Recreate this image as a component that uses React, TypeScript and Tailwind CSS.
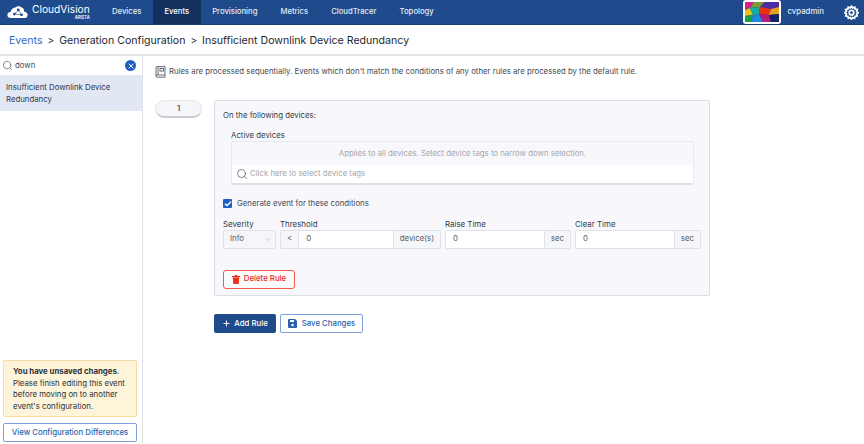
import { Search, ChevronDown, Plus, X, Check } from "lucide-react";

function Logo() {
  return (
    <svg width="21" height="14" viewBox="0 0 26 17" className="shrink-0">
      <path d="M5 16 C1.5 16 0 13.5 0.5 11.5 C1 9.5 2.5 8.5 4.5 8.5 C5 5 8 3 10.5 3 C12 0.8 16 0.5 18 3 C20.5 3.5 21.5 6 21 8 C24 8.5 26 10.5 25.5 13 C25 15 23.5 16 21.5 16 Z" fill="#ffffff" />
      <circle cx="9" cy="11" r="1.7" fill="#1f4a8c" />
      <circle cx="14" cy="6" r="1.7" fill="#1f4a8c" />
      <circle cx="18" cy="12" r="1.7" fill="#1f4a8c" />
      <path d="M9 11 L14 6 L18 12 Z" fill="none" stroke="#1f4a8c" strokeWidth="0.8" />
    </svg>
  );
}

function Avatar() {
  return (
    <div className="w-[38px] h-[24px] bg-white rounded-[3px] p-[2px] shrink-0">
      <svg viewBox="0 0 34 20" className="w-full h-full block" preserveAspectRatio="none">
        <rect width="34" height="20" fill="#2a2a8c" />
        <polygon points="0,0 9,0 5,6 0,8" fill="#d81f8f" />
        <polygon points="9,0 20,0 15,5 5,6" fill="#7f9a30" />
        <polygon points="20,0 34,0 34,5 26,7 15,5" fill="#4a2fa0" />
        <polygon points="0,8 5,6 8,13 0,14" fill="#e2c41e" />
        <polygon points="5,6 15,5 14,12 8,13" fill="#14b0a0" />
        <polygon points="15,5 26,7 24,13 14,12" fill="#ea3410" />
        <polygon points="26,7 34,5 34,12 24,13" fill="#e8a020" />
        <polygon points="0,14 8,13 6,20 0,20" fill="#18a040" />
        <polygon points="8,13 14,12 18,20 6,20" fill="#1c8ae0" />
        <polygon points="14,12 24,13 26,20 18,20" fill="#b81c78" />
        <polygon points="24,13 34,12 34,20 26,20" fill="#15206a" />
      </svg>
    </div>
  );
}

function Gear() {
  return (
    <svg width="15" height="15" viewBox="0 0 24 24" fill="none" stroke="#ffffff" strokeWidth="2.8" className="shrink-0">
      <path d="M12 2 L14 4.6 L17.2 3.4 L17.9 6.7 L21.2 7.2 L20.2 10.4 L22.8 12.4 L20.2 14.4 L21 17.6 L17.8 18 L16.9 21.2 L13.9 20 L12 22.6 L10 20 L7 21.2 L6.2 18 L3 17.6 L3.8 14.4 L1.2 12.4 L3.8 10.4 L2.8 7.2 L6.1 6.7 L6.8 3.4 L10 4.6 Z" />
      <circle cx="12" cy="12.3" r="3.6" />
    </svg>
  );
}

function Book() {
  return (
    <svg width="11" height="12" viewBox="0 0 11 12" fill="none" stroke="#555c68" strokeWidth="0.9" className="shrink-0 mr-[3px]">
      <path d="M1 10 V1.5 Q1 0.6 2 0.6 H10 V9 H2 Q1 9 1 10 Q1 11.2 2 11.2 H10 V9" />
      <path d="M3 0.6 V9" />
      <rect x="5" y="2.5" width="3.5" height="2.6" />
    </svg>
  );
}

function TrashIcon() {
  return (
    <svg width="8" height="9" viewBox="0 0 8 9" fill="#ee2c1c" className="mr-[4px] shrink-0">
      <rect x="0" y="1" width="8" height="1.2" />
      <rect x="2.8" y="0" width="2.4" height="1.4" />
      <path d="M0.8 2.6 H7.2 L6.7 9 H1.3 Z" />
    </svg>
  );
}

function SaveIcon() {
  return (
    <svg width="9" height="9" viewBox="0 0 9 9" className="mr-[5px] shrink-0">
      <path d="M1 0 H7 L9 2 V8 Q9 9 8 9 H1 Q0 9 0 8 V1 Q0 0 1 0 Z" fill="#2c5fb0" />
      <rect x="2" y="1" width="4" height="2" fill="#ffffff" />
      <circle cx="4.5" cy="6" r="1.3" fill="#ffffff" />
    </svg>
  );
}

function NavItem({ label, active }: { label: string; active?: boolean }) {
  return (
    <div className={active ? "h-full px-[11.5px] flex items-center bg-[#14305f] text-white" : "h-full px-[11.5px] flex items-center text-[#e4eaf5]"}>
      {label}
    </div>
  );
}

function FieldLabel({ children }: { children: string }) {
  return <div className="text-[7.9px] leading-[10px] text-[#333b47]">{children}</div>;
}

function Addon({ children, left }: { children: string; left?: boolean }) {
  return (
    <div className={left ? "h-full px-[6px] flex items-center bg-[#f5f6f9] border-r border-[#dfe1e6] text-[#555c68]" : "h-full px-[6px] flex items-center bg-[#f5f6f9] border-l border-[#dfe1e6] text-[#555c68]"}>
      {children}
    </div>
  );
}

export default function App() {
  return (
    <div className="w-[864px] h-[444px] bg-white flex flex-col overflow-hidden text-[7.8px] [font-family:Inter,sans-serif] text-[#333b47]">
      <header className="h-[25px] shrink-0 bg-[#1f4a8c] flex items-center border-b border-[#183d75]">
        <div className="flex items-center pl-[7px] w-[100.5px] gap-[4px]">
          <Logo />
          <div className="flex flex-col items-end text-white leading-none">
            <span className="text-[10.2px] leading-[11px] whitespace-nowrap">CloudVision</span>
            <span className="text-[4.2px] font-semibold leading-[5px]">ARISTA</span>
          </div>
        </div>
        <nav className="flex h-full items-center text-[7.7px] font-medium">
          <NavItem label="Devices" />
          <NavItem label="Events" active />
          <NavItem label="Provisioning" />
          <NavItem label="Metrics" />
          <NavItem label="CloudTracer" />
          <NavItem label="Topology" />
        </nav>
        <div className="ml-auto flex items-center pr-[5px]">
          <Avatar />
          <span className="ml-[6px] mr-[20px] text-[7.8px] font-medium text-[#e4eaf5]">cvpadmin</span>
          <Gear />
        </div>
      </header>

      <div className="h-[31px] shrink-0 border-b-2 border-[#e4e5e8] flex items-center pl-[9px] pt-[2px] text-[10.6px] text-[#1f2733]">
        <span className="text-[#2f6bc4]">Events</span>
        <span className="mx-[5px] text-[10px]">&gt;</span>
        <span>Generation Configuration</span>
        <span className="mx-[5px] text-[10px]">&gt;</span>
        <span>Insufficient Downlink Device Redundancy</span>
      </div>

      <div className="flex-1 flex min-h-0">
        <aside className="w-[143px] shrink-0 border-r border-[#dfe1e6] flex flex-col">
          <div className="h-[19px] flex items-center pl-[2px] pr-[6px]">
            <Search size={11} strokeWidth={1.5} className="text-[#555c68]" />
            <span className="ml-[2px] text-[#444b57]">down</span>
            <span className="ml-auto w-[11px] h-[11px] rounded-full bg-[#1f5fc4] flex items-center justify-center">
              <X size={8} strokeWidth={3} className="text-white" />
            </span>
          </div>
          <div className="h-[36px] bg-[#e2e8f3] px-[6px] py-[6px] leading-[12px] text-[#2c3a52]">
            Insufficient Downlink Device Redundancy
          </div>
          <div className="mt-auto pl-[3px] pr-[5px] pb-[2px] flex flex-col gap-[6px]">
            <div className="h-[57px] rounded-[2px] border border-[#f5dfa0] bg-[#fdf4d9] pl-[9px] pr-[4px] pt-[5px] leading-[11.7px] text-[#2e333b]">
              <div className="font-bold whitespace-nowrap">You have unsaved changes.</div>
              <div>Please finish editing this event before moving on to another event's configuration.</div>
            </div>
            <div className="h-[19px] rounded-[2px] border border-[#7ba0dc] flex items-center justify-center text-[#2c5fb0] font-medium whitespace-nowrap">
              View Configuration Differences
            </div>
          </div>
        </aside>

        <main className="flex-1 pl-[12px] pt-[10px] min-w-0">
          <div className="flex items-center h-[12px] text-[#444b57]">
            <Book />
            <span>Rules are processed sequentially. Events which don't match the conditions of any other rules are processed by the default rule.</span>
          </div>

          <div className="flex items-start mt-[22px]">
            <div className="w-[47px] h-[18px] rounded-full bg-[#f5f6f9] border border-[#e4e5e8] border-b-2 border-b-[#c9ccd2] flex items-center justify-center font-medium text-[#333b47]">
              1
            </div>
            <div className="ml-[12px] w-[496px] h-[196px] bg-[#f8f8fc] border border-[#dcdde2] rounded-[2px] px-[8px] pt-[9px]">
              <div className="leading-[11px]">On the following devices:</div>
              <div className="ml-[8px] mt-[9px] leading-[10px]">Active devices</div>
              <div className="ml-[8px] mr-[7px] mt-[1px] border border-[#e8e9ee] border-b-2 border-b-[#dfe0e5] rounded-[2px]">
                <div className="h-[23px] flex items-center justify-center text-[#a4a7ae]">
                  Applies to all devices. Select device tags to narrow down selection.
                </div>
                <div className="h-[18px] bg-white flex items-center pl-[4px] text-[#a4a7ae]">
                  <Search size={12} strokeWidth={1.5} className="text-[#555c68] mr-[2px]" />
                  Click here to select device tags
                </div>
              </div>

              <div className="flex items-center mt-[13px]">
                <span className="w-[9px] h-[9px] rounded-[1px] bg-[#1f5fc4] flex items-center justify-center">
                  <Check size={8} strokeWidth={4} className="text-white" />
                </span>
                <span className="ml-[5px] text-[#444b57]">Generate event for these conditions</span>
              </div>

              <div className="flex mt-[9px] gap-[4px]">
                <div className="w-[53px]">
                  <FieldLabel>Severity</FieldLabel>
                  <div className="h-[19px] mt-[1px] rounded-[2px] bg-[#f5f6f9] border border-[#dfe1e6] flex items-center justify-between pl-[6px] pr-[3px] text-[#555c68]">
                    Info
                    <ChevronDown size={9} strokeWidth={1} className="text-[#8a8f99]" />
                  </div>
                </div>
                <div className="w-[161px]">
                  <FieldLabel>Threshold</FieldLabel>
                  <div className="h-[19px] mt-[1px] rounded-[2px] bg-white border border-[#dfe1e6] flex items-center text-[#555c68]">
                    <Addon left>&lt;</Addon>
                    <span className="pl-[7px]">0</span>
                    <div className="ml-auto h-full"><Addon>device(s)</Addon></div>
                  </div>
                </div>
                <div className="w-[126px]">
                  <FieldLabel>Raise Time</FieldLabel>
                  <div className="h-[19px] mt-[1px] rounded-[2px] bg-white border border-[#dfe1e6] flex items-center text-[#555c68]">
                    <span className="pl-[7px]">0</span>
                    <div className="ml-auto h-full"><Addon>sec</Addon></div>
                  </div>
                </div>
                <div className="w-[126px]">
                  <FieldLabel>Clear Time</FieldLabel>
                  <div className="h-[19px] mt-[1px] rounded-[2px] bg-white border border-[#dfe1e6] flex items-center text-[#555c68]">
                    <span className="pl-[7px]">0</span>
                    <div className="ml-auto h-full"><Addon>sec</Addon></div>
                  </div>
                </div>
              </div>

              <div className="mt-[21px] w-[72px] h-[19px] rounded-[3px] border border-[#ef5a4c] flex items-center justify-center text-[#ee2c1c] font-medium bg-[#fbfafc]">
                <TrashIcon />
                Delete Rule
              </div>
            </div>
          </div>

          <div className="flex ml-[59px] mt-[18px] gap-[4px] font-medium">
            <div className="w-[62px] h-[19px] rounded-[2px] bg-[#1f4a8c] text-white flex items-center justify-center">
              <Plus size={9} strokeWidth={2.5} className="mr-[3px]" />
              Add Rule
            </div>
            <div className="w-[83px] h-[19px] rounded-[2px] border border-[#7ba0dc] text-[#2c5fb0] flex items-center justify-center">
              <SaveIcon />
              Save Changes
            </div>
          </div>
        </main>
      </div>
    </div>
  );
}
